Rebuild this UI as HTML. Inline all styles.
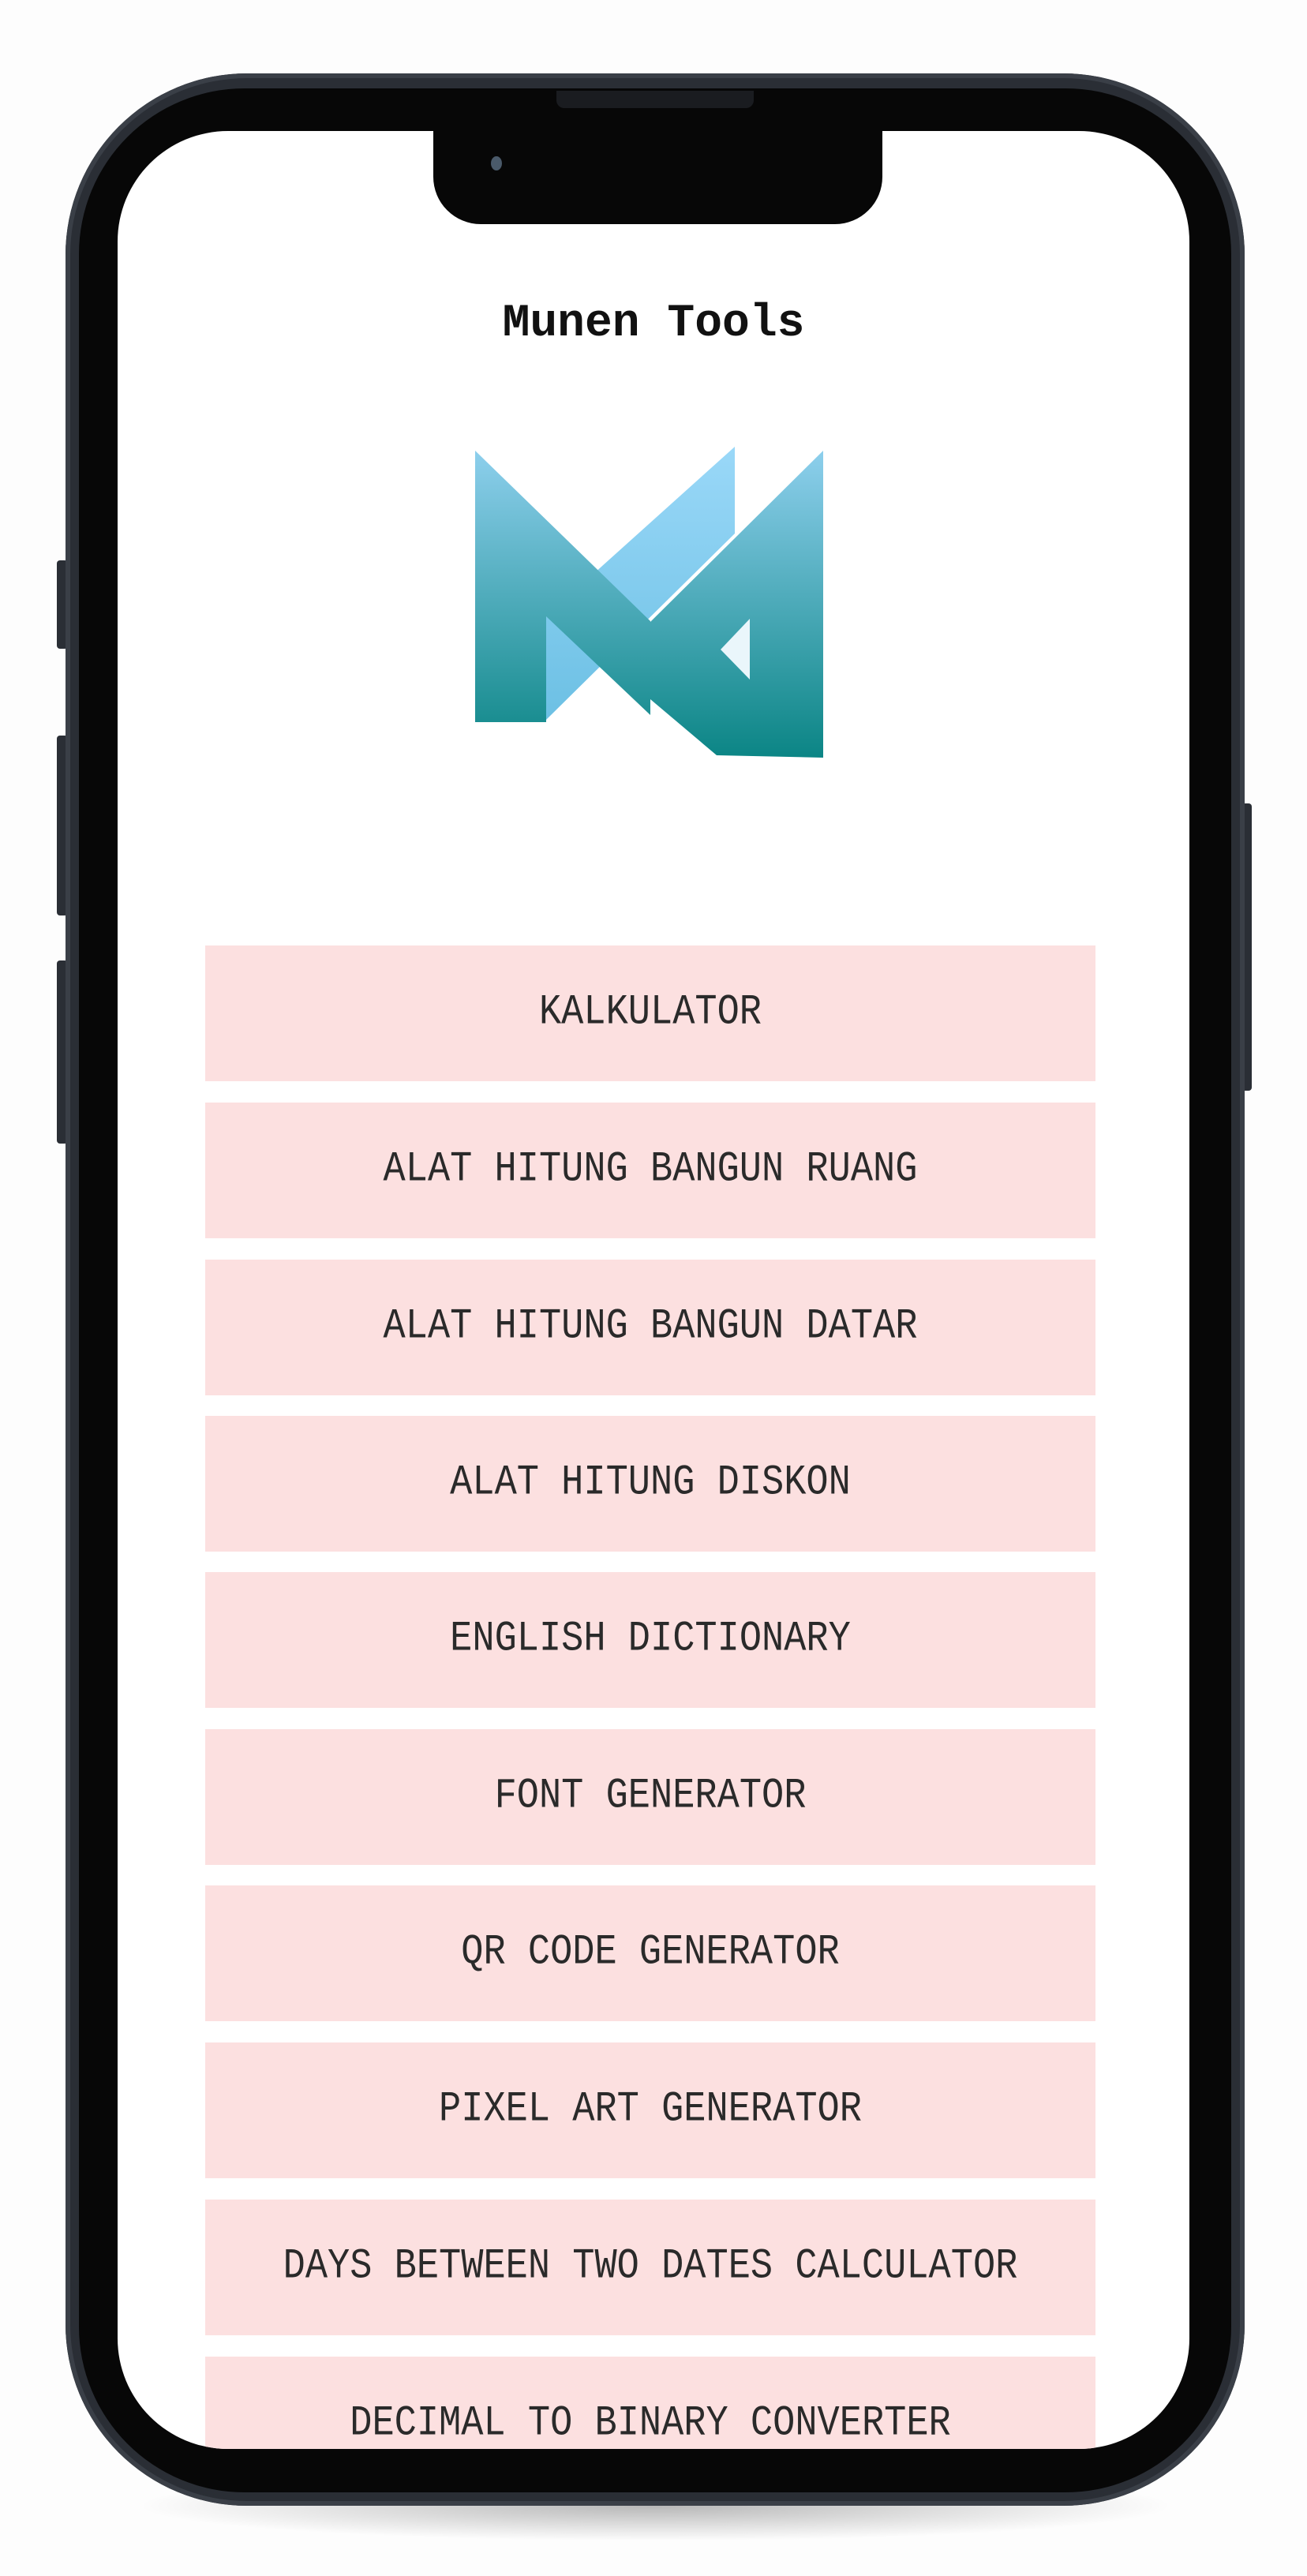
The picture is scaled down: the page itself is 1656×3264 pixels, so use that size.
<!DOCTYPE html>
<html><head><meta charset="utf-8"><style>
html,body{margin:0;padding:0;width:1656px;height:3264px;background:#fdfdfd;overflow:hidden;position:relative;font-family:"Liberation Mono",monospace}
.abs{position:absolute}
.shadow{left:170px;top:3130px;width:1320px;height:90px;border-radius:50%;background:radial-gradient(ellipse at center,rgba(0,0,0,.28),rgba(0,0,0,0) 70%)}
.frame{left:83px;top:93px;width:1494px;height:3082px;border-radius:230px;background:#2a2e35;box-shadow:inset 0 0 0 6px #3a3f47}
.bezel{left:100px;top:112px;width:1460px;height:3046px;border-radius:210px;background:#070707}
.screen{left:149px;top:166px;width:1358px;height:2937px;border-radius:140px;background:#fff;overflow:hidden}
.notch{left:549px;top:150px;width:569px;height:134px;background:#070707;border-radius:0 0 60px 60px}
.spk{left:705px;top:115px;width:250px;height:22px;border-radius:0 0 10px 10px;background:#1a1c20}
.cam{left:622px;top:198px;width:14px;height:18px;border-radius:50%;background:#4a5a6a}
.btn{position:absolute;left:111px;width:1128px;height:172px;background:#fce0e0;color:#2a2a2a;font-size:47px;text-align:center;line-height:172px;white-space:nowrap}
.btn span{display:inline-block;transform:scaleY(1.15)}
.side{background:#2a2e35}
</style></head><body>
<div class="abs shadow"></div>
<div class="abs side" style="left:72px;top:710px;width:14px;height:112px;border-radius:4px"></div>
<div class="abs side" style="left:72px;top:932px;width:14px;height:228px;border-radius:4px"></div>
<div class="abs side" style="left:72px;top:1217px;width:14px;height:232px;border-radius:4px"></div>
<div class="abs side" style="left:1572px;top:1018px;width:14px;height:364px;border-radius:4px"></div>
<div class="abs frame"></div>
<div class="abs bezel"></div>
<div class="abs screen">
  <div style="position:absolute;left:0;top:212px;width:1358px;text-align:center;font-size:58px;font-weight:bold;color:#111">Munen Tools</div>
  <div class="btn" style="top:1032px"><span>KALKULATOR</span></div>
  <div class="btn" style="top:1231px"><span>ALAT HITUNG BANGUN RUANG</span></div>
  <div class="btn" style="top:1430px"><span>ALAT HITUNG BANGUN DATAR</span></div>
  <div class="btn" style="top:1628px"><span>ALAT HITUNG DISKON</span></div>
  <div class="btn" style="top:1826px"><span>ENGLISH DICTIONARY</span></div>
  <div class="btn" style="top:2025px"><span>FONT GENERATOR</span></div>
  <div class="btn" style="top:2223px"><span>QR CODE GENERATOR</span></div>
  <div class="btn" style="top:2422px"><span>PIXEL ART GENERATOR</span></div>
  <div class="btn" style="top:2621px"><span>DAYS BETWEEN TWO DATES CALCULATOR</span></div>
  <div class="btn" style="top:2820px"><span>DECIMAL TO BINARY CONVERTER</span></div>
</div>
<svg class="abs" style="left:0;top:0" width="1656" height="1100">
<defs>
<linearGradient id="g" x1="0" y1="566" x2="0" y2="960" gradientUnits="userSpaceOnUse"><stop offset="0" stop-color="#8fd0ee"/><stop offset="1" stop-color="#0b8585"/></linearGradient>
<linearGradient id="l" x1="0" y1="566" x2="0" y2="912" gradientUnits="userSpaceOnUse"><stop offset="0" stop-color="#9ad8f8"/><stop offset="1" stop-color="#6cc0e4"/></linearGradient>
</defs>
<polygon points="692,781 931,566 931,676 692,912" fill="url(#l)"/>
<polygon points="602,571 824,787 824,906 692,781 692,915 602,915" fill="url(#g)"/>
<polygon points="824,788 1043,571 1043,960 908,957 824,886" fill="url(#g)"/>
<polygon points="913,823 950,784 950,861" fill="#eaf6fb"/>
</svg>
<div class="abs notch"></div>
<div class="abs spk"></div>
<div class="abs cam"></div>
</body></html>
